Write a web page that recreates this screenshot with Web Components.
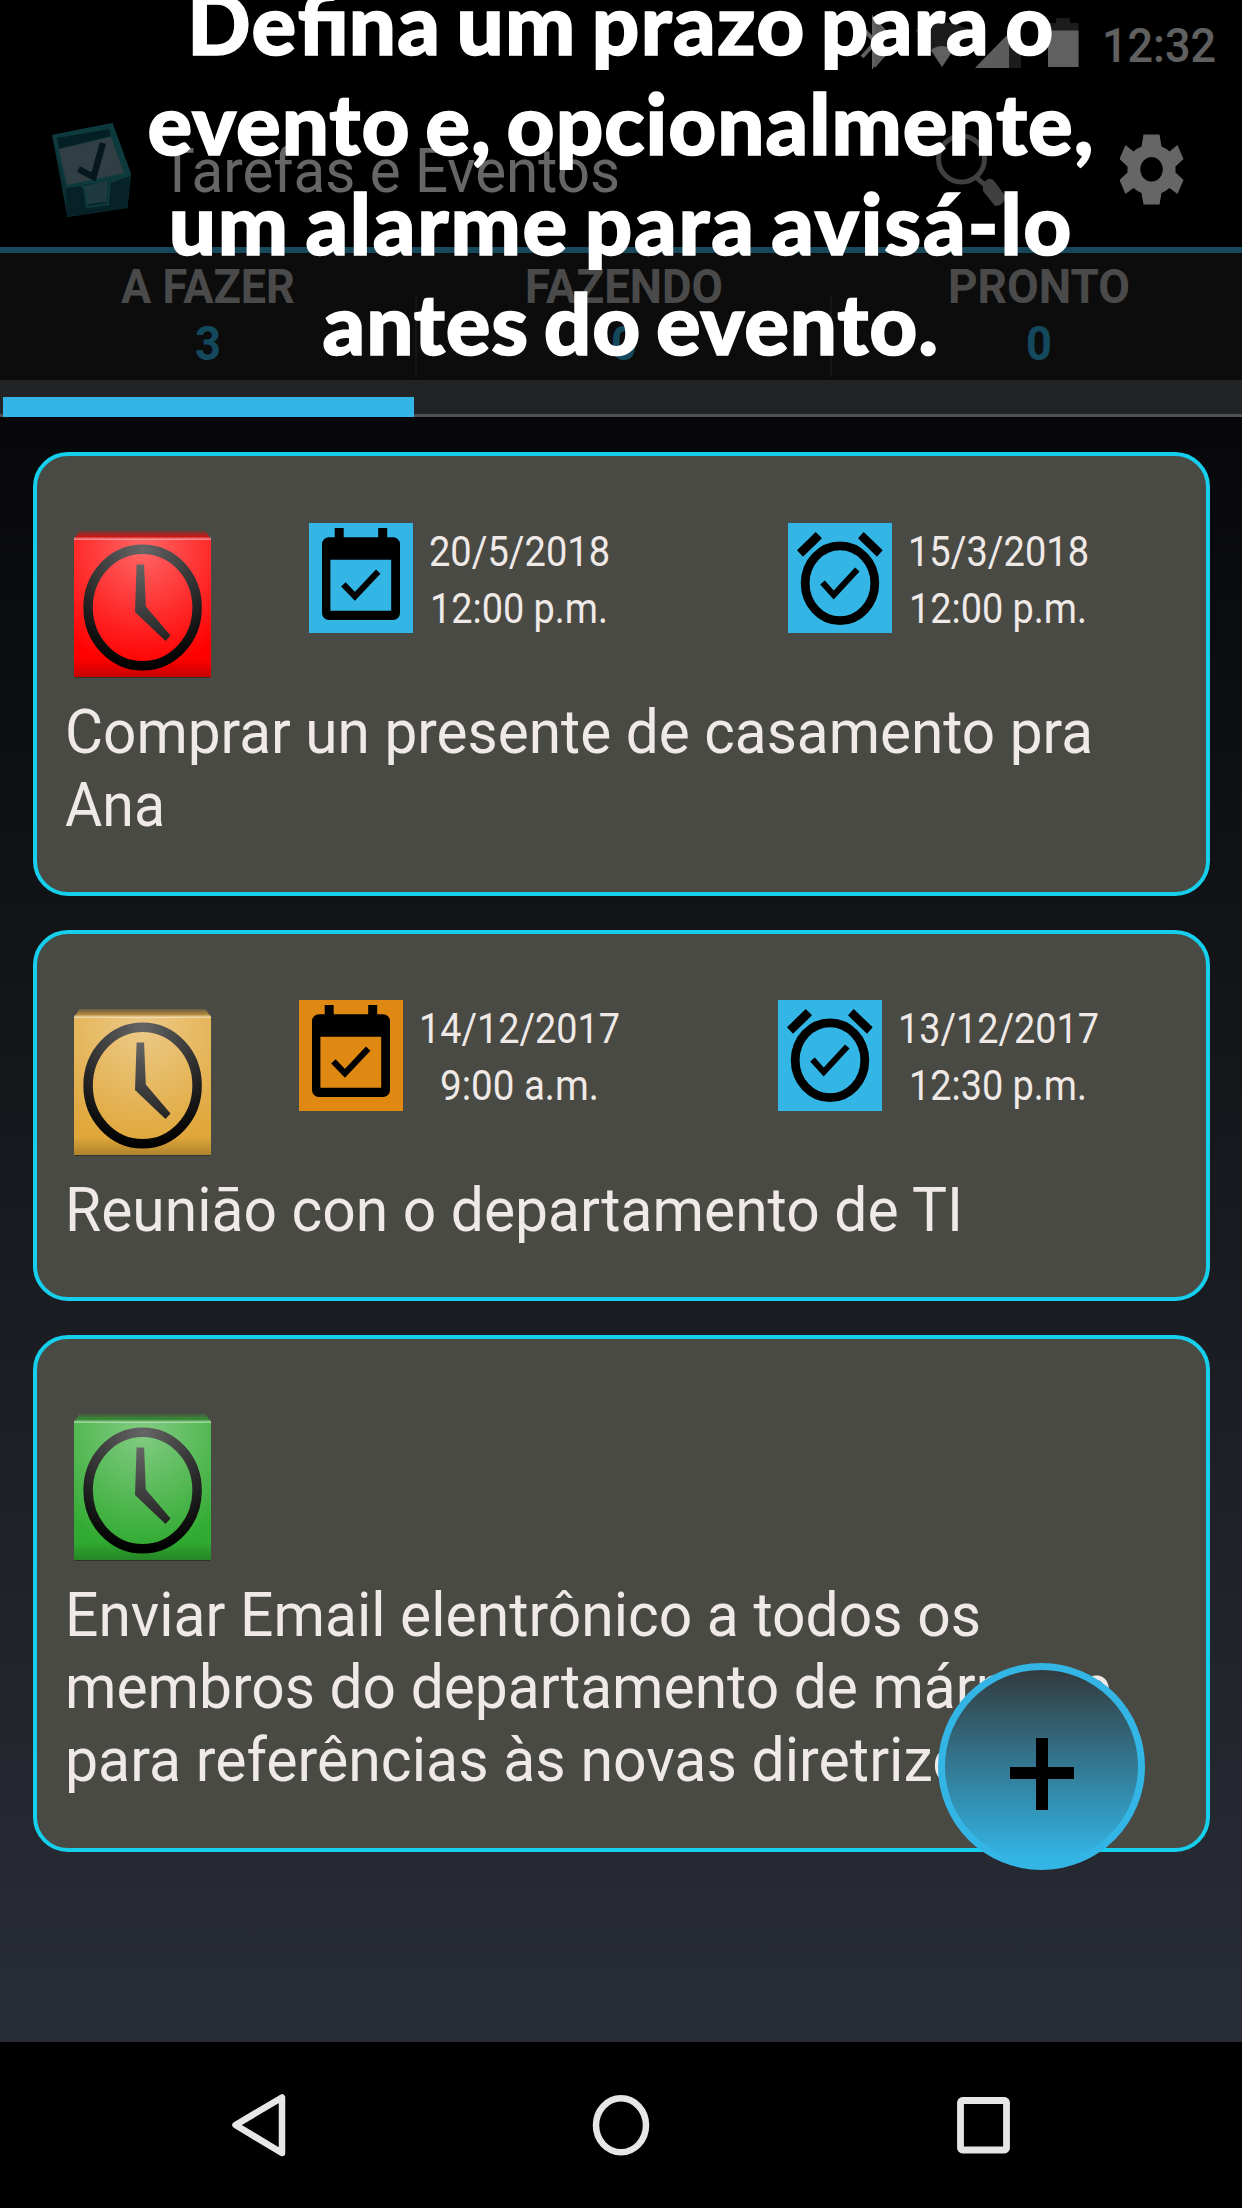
<!DOCTYPE html>
<html lang="pt">
<head>
<meta charset="utf-8">
<title>Tarefas e Eventos</title>
<style>
    body {
        margin: 0;
        background: #000;
        font-family: Roboto, "Liberation Sans", sans-serif;
    }
</style>
</head>
<body>
<task-screen>
    <status-bar slot="top"></status-bar>
    <app-bar slot="top"></app-bar>
    <tab-strip slot="top"></tab-strip>

    <task-card color="#ff0000">
        <task-date slot="dates" icon="calendar" w1="181" w2="178" day="20/5/2018" time="12:00 p.m."></task-date>
        <task-date slot="dates" icon="alarm" w1="181" w2="178" day="15/3/2018" time="12:00 p.m."></task-date>
        <fit-text width="1028">Comprar un presente de casamento pra</fit-text>
        <fit-text width="100">Ana</fit-text>
    </task-card>
    <task-card color="#e0a73a">
        <task-date slot="dates" icon="calendar" color="#e08912" w1="201" w2="159" day="14/12/2017" time="9:00 a.m."></task-date>
        <task-date slot="dates" icon="alarm" w1="201" w2="178" day="13/12/2017" time="12:30 p.m."></task-date>
        <fit-text width="898">Reuniāo con o departamento de TI</fit-text>
    </task-card>
    <task-card color="#30aa30">
        <fit-text width="916">Enviar Email elentrônico a todos os</fit-text>
        <fit-text width="1046">membros do departamento de mármore</fit-text>
        <fit-text width="929">para referências às novas diretrizes</fit-text>
    </task-card>

    <nav-bar slot="bottom"></nav-bar>
    <add-button slot="over"></add-button>
    <promo-caption slot="over">
        <div style="letter-spacing: 1.35px">De<span style="letter-spacing: 0">fi</span>na um prazo para o</div>
        <div style="letter-spacing: 1px">evento e, opcionalmente,</div>
        <div style="letter-spacing: 1.8px">um alarme para avisá-lo</div>
        <div style="letter-spacing: .9px; padding-left: 5px">&nbsp;antes do evento.</div>
    </promo-caption>
</task-screen>

<script>
// One line of text condensed to a given width
class FitText extends HTMLElement {
    connectedCallback() {
        const shadow = this.attachShadow({ mode: "open" });
        shadow.innerHTML = `
            <style>
                :host { display: block; white-space: nowrap; }
                span { display: inline-block; transform-origin: 0 50%; }
            </style>
            <span><slot></slot></span>
            `;
        const width = Number(this.getAttribute("width"));
        const span = shadow.querySelector("span");
        this.style.width = width + "px";
        const natural = span.getBoundingClientRect().width;
        span.style.transform = `scaleX(${width / natural})`;
    }
}

class TaskScreen extends HTMLElement {
    connectedCallback() {
        const shadow = this.attachShadow({ mode: "open" });
        shadow.innerHTML = `
            <style>
                :host {
                    display: flex;
                    flex-direction: column;
                    position: relative;
                    width: 1242px;
                    height: 2208px;
                    overflow: hidden;
                    background: linear-gradient(#000 90px, #292d36 2042px);
                }
                main {
                    flex: 1;
                    display: flex;
                    flex-direction: column;
                    gap: 33.5px;
                    padding: 35px 32px 0 33px;
                }
            </style>
            <slot name="top"></slot>
            <main><slot></slot></main>
            <slot name="bottom"></slot>
            <slot name="over"></slot>
            `;
    }
}

class StatusBar extends HTMLElement {
    connectedCallback() {
        const shadow = this.attachShadow({ mode: "open" });
        shadow.innerHTML = `
            <style>
                :host {
                    display: flex;
                    justify-content: flex-end;
                    height: 87px;
                    background: #000;
                    color: #f0f0f0;
                    font-size: 47.5px;
                    line-height: 92px;
                }
                fit-text { margin: 0 26px 0 22px; font-weight: 500; }
            </style>
            <svg width="230" height="87" viewBox="850 0 230 87">
                <path d="M862 28l23 23-11 13V20l11 12-23 25" fill="none" stroke="#f0f0f0" stroke-width="4"/>
                <path d="M875 20v48l12-14-9-9 9-10z" fill="#e0e0e0"/>
                <path d="M915 30q27-16 54 0L942 67z" fill="#484848"/>
                <path d="M931 50q11-8 22 0L942 67z" fill="#f0f0f0"/>
                <path d="M975 68l46-47v47z" fill="#484848"/>
                <path d="M975 68l34-35v35z" fill="#e6e6e6"/>
                <path d="M1048 31v-8h8v-5h14v5h8.600v8z" fill="#484848"/>
                <path d="M1048 30.500h30.600V67H1048z" fill="#f0f0f0"/>
            </svg>
            <fit-text width="114">12:32</fit-text>
            `;
    }
}

class AppBar extends HTMLElement {
    connectedCallback() {
        const shadow = this.attachShadow({ mode: "open" });
        shadow.innerHTML = `
            <style>
                :host {
                    display: flex;
                    align-items: center;
                    box-sizing: border-box;
                    height: 165.500px;
                    padding-left: 40px;
                    background: #000;
                    border-bottom: 6px solid #3bb5e5;
                    color: #fff;
                    font-size: 61px;
                }
                fit-text { margin: 8px 314px 0 10px; }
                .search { margin-top: 6px; }
                .gear { margin: 5px 0 0 111px; }
            </style>
            <svg width="110" height="130" viewBox="0 0 110 130">
                <path d="M12 33L72.500 21 91 72l-3.500 34L27.500 115z" fill="#1d7883"/>
                <path d="M12 33L72.500 21 91 72l-17 6-48 7z" fill="#25929c"/>
                <path d="M17 36l52-9 2 7-52 13z" fill="#0d525b"/>
                <path d="M19 47l52-12 13 36-57 12z" fill="#7a9ba8"/>
                <path d="M26 85l16-3 6 16 20-4V80l22-8-3 34-60 9z" fill="#0f5560"/>
                <path d="M44 84l24-5-1 21-20 2z" fill="#4c919b"/>
                <path d="M26 85l14-2q4 0 5 7l2 15 21-3 2-22 20-7" fill="none" stroke="#25929c" stroke-width="2"/>
                <path d="M38.500 67l15 8L63 41" fill="none" stroke="#123e4a" stroke-width="6.500"/>
            </svg>
            <fit-text width="460">Tarefas e Eventos</fit-text>
            <svg class="search" width="75" height="80" viewBox="933 130 75 80">
                <circle cx="960.500" cy="159" r="23" fill="none" stroke="#a0a0a0" stroke-width="5"/>
                <path d="M976 178l9 8" stroke="#a0a0a0" stroke-width="5"/>
                <path d="M982 183l5-4q4-1 7 3l11 15q-3 9-11 9L982 191z" fill="#a0a0a0"/>
            </svg>
            <svg class="gear" width="64" height="71" viewBox="1120 134 64 71">
                <path fill="#fff" fill-rule="evenodd" d="M1143.500 134.500h16l2 12q4 1.500 8 5l8-6.500 6 14-8 7.500v6l8 7.500-6 14-8-6q-4 3.500-8 5l-2 11.500h-16l-2-11.500q-4-1.500-8-5l-8 6-6-14 8-7.500v-6l-8-7.500 6-14 8 6.500q4-3.500 8-5zM1151.500 157a11.300 12.300 0 1 0 .1 0z"/>
            </svg>
            `;
    }
}

class TabStrip extends HTMLElement {
    connectedCallback() {
        const shadow = this.attachShadow({ mode: "open" });
        shadow.innerHTML = `
            <style>
                :host {
                    display: block;
                    background: #202020;
                }
                .tabs {
                    display: grid;
                    grid-template-columns: 416.500px 415.500px 1fr;
                    height: 127.500px;
                    font-size: 48px;
                    font-weight: 700;
                    line-height: 57px;
                    color: #bababa;
                }
                .tabs div {
                    display: flex;
                    flex-direction: column;
                    align-items: center;
                    padding-top: 5.500px;
                    background: linear-gradient(#383838, #383838) right 42px / 2px 82px no-repeat;
                }
                .tabs div:last-child { background: none; padding-left: 3px; }
                .count { color: #33b5e5; }
                .track {
                    box-sizing: border-box;
                    height: 37px;
                    padding: 17px 0 0 3px;
                    background: linear-gradient(#4f5154, #4f5154) 0 100% / 100% 3px no-repeat, #212325;
                }
                .bar { width: 411px; height: 20px; background: #33b5e5; }
            </style>
            <div class="tabs">
                <div><fit-text width="174">A FAZER</fit-text><fit-text class="count" width="26">3</fit-text></div>
                <div><fit-text width="198">FAZENDO</fit-text><fit-text class="count" width="26">0</fit-text></div>
                <div><fit-text width="182">PRONTO</fit-text><fit-text class="count" width="26">0</fit-text></div>
            </div>
            <div class="track"><div class="bar"></div></div>
            `;
    }
}

class TaskCard extends HTMLElement {
    connectedCallback() {
        const shadow = this.attachShadow({ mode: "open" });
        const color = this.getAttribute("color");
        shadow.innerHTML = `
            <style>
                :host {
                    display: block;
                    box-sizing: border-box;
                    padding: 0 0 51px 33px;
                    border: 4px solid #16cfec;
                    border-radius: 35px;
                    background: #4a4a44;
                    color: #efe9e7;
                    font-size: 61.500px;
                    line-height: 72.600px;
                }
                .head {
                    display: flex;
                    height: 240px;
                    padding-left: 4px;
                }
                .clock { margin: 75px 8px 0 0; }
                .dates {
                    display: grid;
                    grid-template-columns: 479px 479px;
                    align-items: start;
                    padding-top: 66.600px;
                }
                ::slotted(fit-text) { margin-left: -5px; }
            </style>
            <div class="head">
                <svg class="clock" width="137" height="148" viewBox="0 0 137 148">
                    <defs>
                        <radialGradient id="shine" cx=".5" cy=".08" r=".85">
                            <stop offset="0" stop-color="#fff" stop-opacity=".4"/>
                            <stop offset="1" stop-color="#fff" stop-opacity="0"/>
                        </radialGradient>
                        <linearGradient id="foot" x2="0" y2="1">
                            <stop offset="0" stop-opacity="0"/>
                            <stop offset="1" stop-opacity=".22"/>
                        </linearGradient>
                        <linearGradient id="edge" x2="0" y2="1">
                            <stop offset="0" stop-color="#4a4a44" stop-opacity=".8"/>
                            <stop offset="1" stop-color="#4a4a44" stop-opacity=".1"/>
                        </linearGradient>
                    </defs>
                    <path d="M1 9V145h135V9z" fill="#000" opacity=".35" transform="translate(0 2)"/>
                    <path d="M0 8L6 0h125l6 8z" fill="${color}"/>
                    <path d="M0 8L6 0h125l6 8z" fill="url(#edge)"/>
                    <path d="M0 8h137v138H0z" fill="${color}"/>
                    <ellipse cx="68.600" cy="76.500" rx="54.500" ry="58.300" fill="none" stroke="#000" stroke-width="9.500"/>
                    <path d="M62.600 33.500h7.500l1.700 42L96.500 104.500l-5 5.500L61 81z" fill="#111"/>
                    <path d="M0 8h137v138H0z" fill="url(#shine)"/>
                    <path d="M0 128h137v18H0z" fill="url(#foot)"/>
                    <path d="M0 6.500h137v2.500H0z" fill="#fff" opacity=".4"/>
                </svg>
                <div class="dates"><slot name="dates"></slot></div>
            </div>
            <slot></slot>
            `;
    }
}

const taskIcons = {
    calendar: `
        <path d="M25.700 5h9v12h-9zM69.200 5h9v12h-9z"/>
        <path fill-rule="evenodd" d="M20 14.300h64a7 7 0 0 1 7 7V90a7 7 0 0 1-7 7H20a7 7 0 0 1-7-7V21.300a7 7 0 0 1 7-7zM21.400 36.700v51h60.800v-51z"/>
        <path d="M34.400 61.300l11.500 12 23.300-24.600" fill="none" stroke="#000" stroke-width="6.200"/>`,
    alarm: `
        <path d="M9 27.300L27.700 9l6.300 6.300L15 33.700zM70 15.300L75.700 9l19 18.300-5.700 6.400z"/>
        <ellipse cx="52" cy="60.200" rx="34.800" ry="37.400" fill="none" stroke="#000" stroke-width="8.800"/>
        <path d="M34.500 59.500l11.200 12.500 23.600-25.500" fill="none" stroke="#000" stroke-width="6.200"/>`
};

class TaskDate extends HTMLElement {
    connectedCallback() {
        const shadow = this.attachShadow({ mode: "open" });
        shadow.innerHTML = `
            <style>
                :host {
                    display: flex;
                    justify-content: center;
                    gap: 16px;
                    padding-left: 1px;
                    font-size: 42px;
                    line-height: 57px;
                }
                svg { background: ${this.getAttribute("color") || "#33b5e5"}; }
                div {
                    display: flex;
                    flex-direction: column;
                    align-items: center;
                }
            </style>
            <svg width="104" height="110.700" viewBox="0 0 104 110.700">${taskIcons[this.getAttribute("icon")]}</svg>
            <div>
                <fit-text width="${this.getAttribute("w1")}">${this.getAttribute("day")}</fit-text>
                <fit-text width="${this.getAttribute("w2")}">${this.getAttribute("time")}</fit-text>
            </div>
            `;
    }
}

class AddButton extends HTMLElement {
    connectedCallback() {
        const shadow = this.attachShadow({ mode: "open" });
        shadow.innerHTML = `
            <style>
                :host {
                    position: absolute;
                    left: 938px;
                    top: 1662.500px;
                    box-sizing: border-box;
                    width: 207px;
                    height: 207.500px;
                    border: 7px solid #33b5e5;
                    border-radius: 50%;
                    background: linear-gradient(#333638, #33b5e5 95%) border-box;
                }
                svg { display: block; margin: 68.500px 0 0 65px; }
            </style>
            <svg width="64" height="72" viewBox="0 0 64 72">
                <path d="M26 0h12v29h26v12H38v31H26V41H0V29h26z"/>
            </svg>
            `;
    }
}

class NavBar extends HTMLElement {
    connectedCallback() {
        const shadow = this.attachShadow({ mode: "open" });
        shadow.innerHTML = `
            <style>
                :host {
                    display: grid;
                    grid-template-columns: repeat(3, 362.500px);
                    place-content: center;
                    place-items: center;
                    height: 166px;
                    background: #000;
                }
                svg { fill: none; stroke: #e6e6e6; }
            </style>
            <svg width="70" height="70" viewBox="223.500 2090 70 70">
                <path d="M235 2125l46.500-27.500v55.500z" stroke-width="6.500" stroke-linejoin="round"/>
            </svg>
            <svg width="70" height="70" viewBox="586 2090 70 70">
                <ellipse cx="621" cy="2125.300" rx="25" ry="27" stroke-width="6.500"/>
            </svg>
            <svg width="70" height="70" viewBox="948.500 2090 70 70">
                <rect x="960" y="2100.500" width="46" height="49.500" rx="2" stroke-width="6.800"/>
            </svg>
            `;
    }
}

class PromoCaption extends HTMLElement {
    connectedCallback() {
        const shadow = this.attachShadow({ mode: "open" });
        shadow.innerHTML = `
            <style>
                :host {
                    position: absolute;
                    inset: 0 0 auto;
                    height: 380px;
                    background: rgba(0, 0, 0, .6);
                    color: #fff;
                    font: 900 83.330px/100px Lato, "Open Sans", sans-serif;
                    -webkit-text-stroke: 1.500px #fff;
                    word-spacing: -6px;
                    text-align: center;
                    white-space: nowrap;
                }
                div { margin-top: -27px; }
            </style>
            <div><slot></slot></div>
            `;
    }
}

customElements.define("task-screen", TaskScreen);
customElements.define("status-bar", StatusBar);
customElements.define("app-bar", AppBar);
customElements.define("tab-strip", TabStrip);
customElements.define("task-card", TaskCard);
customElements.define("task-date", TaskDate);
customElements.define("add-button", AddButton);
customElements.define("nav-bar", NavBar);
customElements.define("promo-caption", PromoCaption);
// last, so that each line measures itself in the font it inherits
customElements.define("fit-text", FitText);
</script>
</body>
</html>
